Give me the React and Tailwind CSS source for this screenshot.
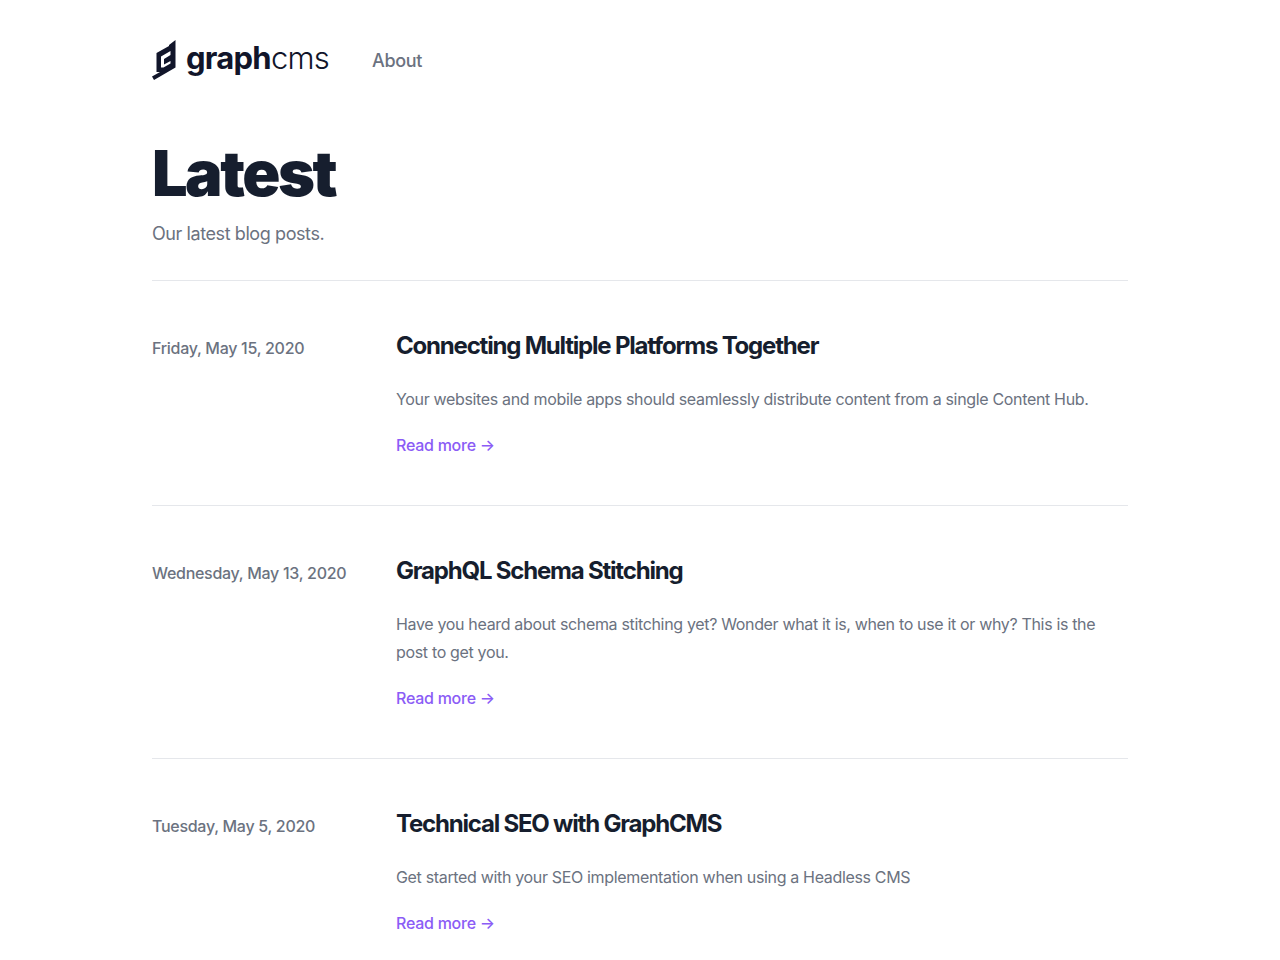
import React from "react";

const posts = [
  {
    date: "Friday, May 15, 2020",
    title: "Connecting Multiple Platforms Together",
    excerpt:
      "Your websites and mobile apps should seamlessly distribute content from a single Content Hub.",
  },
  {
    date: "Wednesday, May 13, 2020",
    title: "GraphQL Schema Stitching",
    excerpt:
      "Have you heard about schema stitching yet? Wonder what it is, when to use it or why? This is the post to get you.",
  },
  {
    date: "Tuesday, May 5, 2020",
    title: "Technical SEO with GraphCMS",
    excerpt: "Get started with your SEO implementation when using a Headless CMS",
  },
];

const Logo = () => (
  <div className="flex items-center h-10">
    <svg width="24" height="40" viewBox="0 0 24 40" className="block">
      <path
        d="M17 5 L23.5 0 L23.5 27.5 L2 40 L0 36.5 L8 32 L4.5 32 L4.5 13 L17 6 Z M18.5 11 L9 16.5 L9 27.5 L11.5 27.5 L18.5 23.5 L18.5 21 L12 24.5 L12 19 L18.5 15 Z"
        fill="#11152A"
        fillRule="evenodd"
      />
    </svg>
    <span className="ml-[10px] text-[31px] leading-10 tracking-[-0.024em] text-[#11152A] font-bold -mt-1">
      graph<span className="font-light">cms</span>
    </span>
  </div>
);

const App = () => {
  return (
    <div className="max-w-5xl mx-auto px-6 bg-white font-['Inter',sans-serif]">
      <nav className="flex items-center pt-10 pb-10">
        <Logo />
        <a href="#" className="ml-[43px] text-lg leading-7 tracking-[-0.018em] font-medium text-[#6b7280] mt-[2px]">
          About
        </a>
      </nav>

      <div className="pt-6 pb-8 border-b border-[#e5e7eb]">
        <h1 className="text-[63px] leading-[58px] font-black tracking-[-0.04em] text-[#161e2e]">
          Latest
        </h1>
        <p className="mt-[18px] text-lg leading-7 tracking-[-0.023em] text-[#6b7280]">Our latest blog posts.</p>
      </div>

      <ul className="divide-y divide-[#e5e7eb]">
        {posts.map((post) => (
          <li key={post.title} className="pt-[49px] pb-12">
            <article className="grid grid-cols-4 items-baseline">
              <p className="text-base leading-6 tracking-[-0.018em] font-medium text-[#6b7280]">{post.date}</p>
              <div className="col-span-3">
                <h2 className="text-2xl leading-8 font-bold tracking-[-0.05em] text-[#161e2e]">
                  {post.title}
                </h2>
                <p className="mt-[23px] text-base leading-7 tracking-[-0.021em] text-[#6b7280]">{post.excerpt}</p>
                <a href="#" className="block mt-5 text-base leading-6 tracking-[-0.016em] font-medium text-[#8b5cf6]">
                  Read more →
                </a>
              </div>
            </article>
          </li>
        ))}
      </ul>
    </div>
  );
};

export default App;
